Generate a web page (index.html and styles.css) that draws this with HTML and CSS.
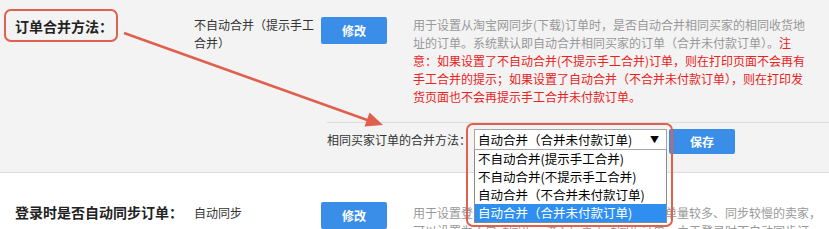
FILE: index.html
```html
<!DOCTYPE html>
<html lang="zh-CN">
<head>
<meta charset="utf-8">
<title>订单设置</title>
<link rel="stylesheet" href="styles.css">
</head>
<body>
<div class="page">
  <section class="row row-gray">
    <div class="row-main">
      <div class="label">订单合并方法：</div>
      <div class="value">不自动合并（提示手工合并）</div>
      <div class="action"><button class="btn">修改</button></div>
      <div class="desc">用于设置从淘宝网同步(下载)订单时，是否自动合并相同买家的相同收货地<br>址的订单。系统默认即自动合并相同买家的订单（合并未付款订单）。<span class="warn">注<br>意：如果设置了不自动合并(不提示手工合并)订单，则在打印页面不会再有<br>手工合并的提示；如果设置了自动合并（不合并未付款订单），则在打印发<br>货页面也不会再提示手工合并未付款订单。</span></div>
    </div>
    <div class="sub">
      <span class="sub-label">相同买家订单的合并方法：</span>
      <div class="select"><span class="select-text">自动合并（合并未付款订单)</span><span class="caret">▼</span></div>
      <button class="btn btn-save">保存</button>
    </div>
  </section>
  <section class="row row-white">
    <div class="row-main row-main-2">
      <div class="label label-2">登录时是否自动同步订单：</div>
      <div class="value value-2">自动同步</div>
      <div class="action"><button class="btn">修改</button></div>
      <div class="desc desc-2">用于设置登录系统时是否自动同步订单。对于订单量较多、同步较慢的卖家，<br>可以设置为不自动同步，进入后再手动同步订单，由于登录时不自动同步订</div>
    </div>
  </section>

  <ul class="dropdown">
    <li class="opt">不自动合并(提示手工合并)</li>
    <li class="opt">不自动合并(不提示手工合并)</li>
    <li class="opt">自动合并（不合并未付款订单)</li>
    <li class="opt opt-active">自动合并（合并未付款订单)</li>
  </ul>

  <div class="mark mark-label"></div>
  <div class="mark mark-select"></div>
  <svg class="arrow" width="829" height="229" viewBox="0 0 829 229">
    <line x1="124" y1="33" x2="370" y2="121" stroke="#e0604e" stroke-width="2.5"/>
    <polygon points="383,125 364.5,126.5 369.5,112.5" fill="#e0604e"/>
  </svg>
</div>
</body>
</html>
```

FILE: styles.css
```css
* { box-sizing: border-box; }
html, body { margin: 0; padding: 0; }
body {
  font-family: "Noto Sans CJK SC", "Noto Sans", sans-serif;
  font-size: 12px;
  color: #333;
  background: #fff;
  width: 829px;
  height: 229px;
  overflow: hidden;
}
.page { position: relative; width: 829px; height: 229px; overflow: hidden; }

.row-gray {
  background: #f3f3f3;
  border-bottom: 1px solid #dcdcdc;
  height: 173px;
}
.row-white { background: #fff; }

.row-main {
  display: flex;
  align-items: flex-start;
  padding-top: 16px;
}
.row-main-2 { padding-top: 28px; }

.label {
  width: 194px;
  padding-left: 15px;
  font-size: 14px;
  font-weight: bold;
  line-height: 20px;
  color: #222;
}
.label-2 { margin-top: 1px; }

.value {
  width: 127px;
  line-height: 18px;
  color: #333;
}
.value-2 { margin-top: 3px; }

.action { width: 92px; }

.btn {
  display: block;
  width: 66px;
  height: 27px;
  margin-top: 1px;
  border: 0;
  border-radius: 2px;
  background: #3b8ee8;
  color: #fff;
  font-family: inherit;
  font-size: 12px;
  font-weight: bold;
  padding: 0;
}

.desc {
  width: 410px;
  line-height: 18px;
  color: #999;
  white-space: nowrap;
}
.desc-2 { margin-top: 3px; }
.warn { color: #e8221c; }

.sub {
  display: flex;
  align-items: flex-start;
  margin-left: 327px;
  margin-top: 16px;
  border-top: 1px solid #dcdcdc;
  padding-top: 6px;
}
.sub-label {
  line-height: 21px;
  color: #333;
  width: 147px;
}
.select {
  display: flex;
  align-items: center;
  justify-content: space-between;
  width: 193px;
  height: 21px;
  border: 1px solid #a6a6a6;
  background: #fff;
  padding: 0 7px 0 3px;
  font-size: 12.5px;
  color: #000;
}
.select-text { line-height: 19px; }
.caret { font-size: 9px; line-height: 19px; color: #000; }
.btn-save {
  height: 25px;
  margin-top: 0;
  margin-left: 2px;
}

.dropdown {
  position: absolute;
  left: 474px;
  top: 150px;
  width: 193px;
  margin: 0;
  padding: 0;
  list-style: none;
  background: #fff;
  border: 1px solid #8a8a8a;
  border-top: 0;
}
.opt {
  height: 18px;
  line-height: 18px;
  padding-left: 3px;
  font-size: 12.5px;
  color: #000;
  white-space: nowrap;
}
.opt-active { background: #2f8ff0; color: #fff; }

.mark {
  position: absolute;
  border: 2px solid #e0604e;
  border-radius: 7px;
}
.mark-label { left: 4px; top: 9px; width: 114px; height: 33px; }
.mark-select { left: 466px; top: 123px; width: 207px; height: 104px; }

.arrow { position: absolute; left: 0; top: 0; pointer-events: none; }
```
